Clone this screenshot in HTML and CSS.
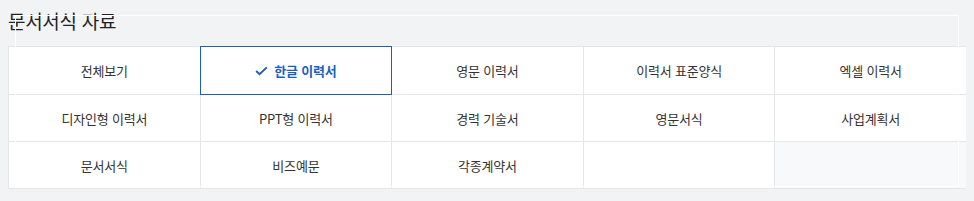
FILE: index.html
```html
<!DOCTYPE html>
<html lang="ko">
<head>
    <meta charset="UTF-8">
    <meta name="viewport" content="width=device-width, initial-scale=1.0">
    <title>문서서식 자료</title>
    <link rel="stylesheet" href="styles.css">
</head>
<body>
    <!-- 카테고리 목록 -->
    <div class="category-box">
        <h2 class="category-title">문서서식 자료</h2>

        <ul class="category-list">
            <li><a href="#">전체보기</a></li>
            <li class="active"><a href="#">
                <svg class="check" width="13" height="10" viewBox="0 0 13 10"><path d="M1.2 5 L4.6 8.3 L11.8 1.4" fill="none" stroke="currentColor" stroke-width="1.9"/></svg>
                한글 이력서</a></li>
            <li><a href="#">영문 이력서</a></li>
            <li><a href="#">이력서 표준양식</a></li>
            <li><a href="#">엑셀 이력서</a></li>
            <li><a href="#">디자인형 이력서</a></li>
            <li><a href="#">PPT형 이력서</a></li>
            <li><a href="#">경력 기술서</a></li>
            <li><a href="#">영문서식</a></li>
            <li><a href="#">사업계획서</a></li>
            <li><a href="#">문서서식</a></li>
            <li><a href="#">비즈예문</a></li>
            <li><a href="#">각종계약서</a></li>
            <li class="empty"></li>
            <li class="empty last"></li>
        </ul>

        <!-- 흰 테두리 -->
        <div class="frame-line"></div>
    </div>
</body>
</html>
```

FILE: styles.css
```css
/* 기본 */
body {
    font-family: "Noto Sans CJK KR", "Noto Sans", sans-serif;
    margin: 8px;
    padding: 0;
    background-color: #f2f3f5;
    color: #333;
}

.category-box {
    position: relative;
}

.category-title {
    margin: 0 0 12px 0;
    font-size: 19px;
    font-weight: 400;
    line-height: 26px;
    color: #222;
    letter-spacing: -0.3px;
}

/* 목록 그리드 */
.category-list {
    list-style: none;
    margin: 0;
    padding: 0;
    width: 958px;
    display: grid;
    grid-template-columns: repeat(5, 1fr);
    border-top: 1px solid #e4e6e9;
    border-left: 1px solid #e4e6e9;
    background-color: #fff;
}

.category-list li {
    height: 46px;
    border-right: 1px solid #e4e6e9;
    border-bottom: 1px solid #e4e6e9;
    box-sizing: content-box;
    position: relative;
}

.category-list li:nth-child(-n+5) {
    height: 47px;
}

.category-list a {
    display: flex;
    align-items: center;
    justify-content: center;
    gap: 6px;
    height: 100%;
    font-size: 13px;
    color: #333;
    text-decoration: none;
    letter-spacing: -0.2px;
}

.category-list li.active {
    z-index: 1;
}

.category-list li.active::after {
    content: '';
    position: absolute;
    top: -1px;
    left: -1px;
    right: -1px;
    bottom: -1px;
    border: 1px solid #1b5fc1;
    pointer-events: none;
}

.category-list li.active a {
    color: #1b5fc1;
    font-weight: 700;
}

.check {
    display: block;
    margin-top: 1px;
}

.category-list li.last {
    background-color: #f8f9fb;
}

/* 흰 테두리 (겹침) */
.frame-line {
    position: absolute;
    top: 7px;
    left: 7px;
    width: 942px;
    height: 170px;
    border: 1px solid #fff;
    pointer-events: none;
    z-index: 2;
}
```
